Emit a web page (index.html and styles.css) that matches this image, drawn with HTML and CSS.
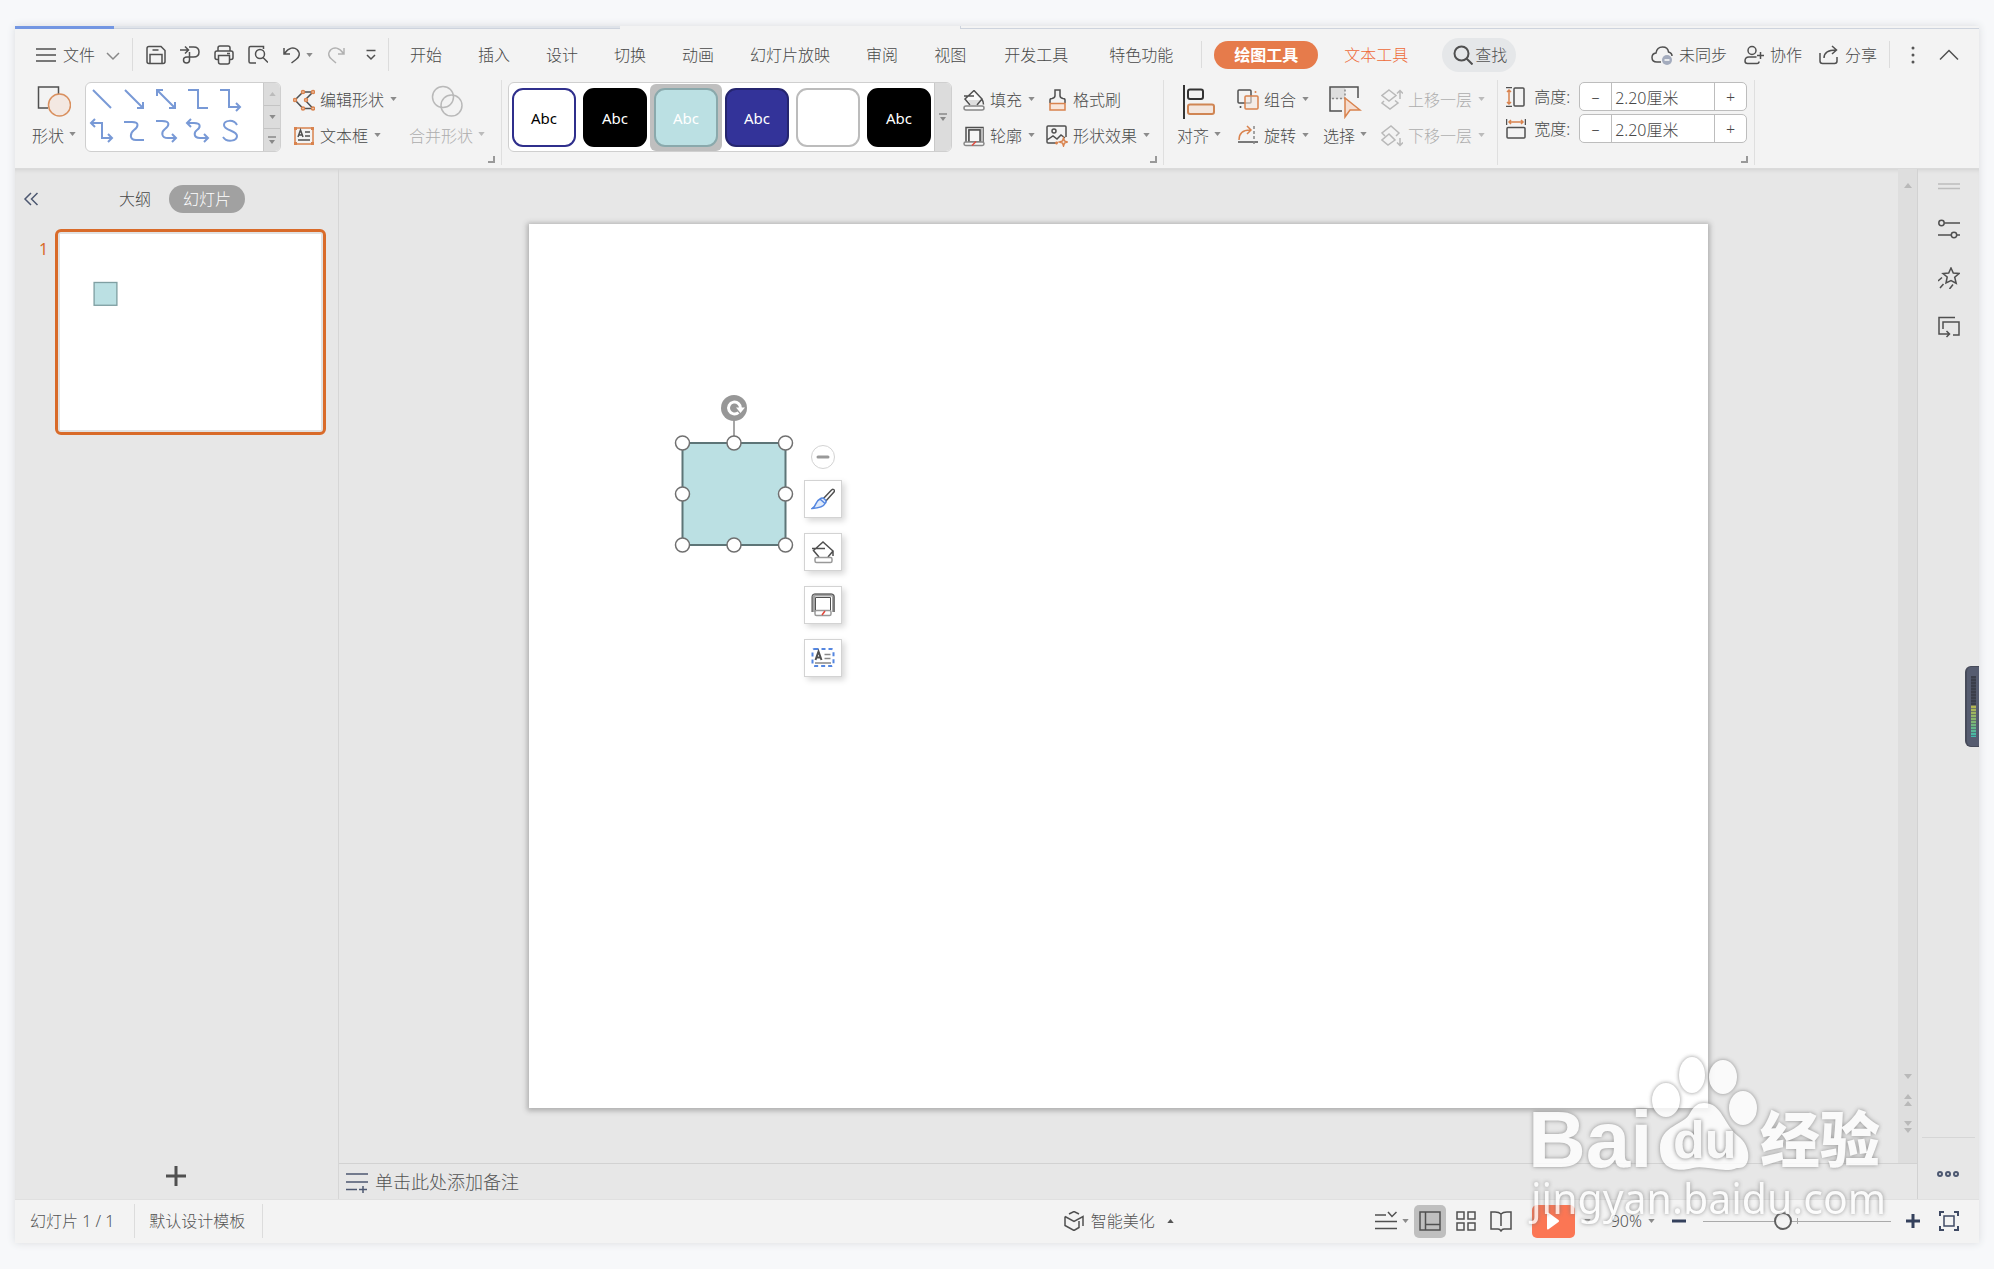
FILE: index.html
```html
<!DOCTYPE html>
<html lang="zh-CN">
<head>
<meta charset="utf-8">
<meta name="viewport" content="width=device-width, initial-scale=1">
<title>WPS 演示</title>
<link rel="stylesheet" href="styles.css">
</head>
<body>
<svg class="sprite" aria-hidden="true">
  <symbol id="caret" viewBox="0 0 8 5"><path d="M0 0h8L4 5z" fill="currentColor"/></symbol>
  <symbol id="bucket" viewBox="0 0 22 22"><path d="M11 2l8 8-5 6H7l-5-6z" fill="#fafafa" stroke="none"/><path d="M5 11h13l-4 5H8z" fill="#dedede" stroke="none"/><path d="M11 1.500l8 8.500-5 6M7 16l-5-6 9-8.500M1 7h10M19 10.500q1.500 2 1.500 5"/><rect x="1" y="17" width="20" height="4" rx="2" fill="#f7f7f7" stroke="#888"/></symbol>
  <symbol id="outline" viewBox="0 0 22 22"><path d="M3 17V2.500h17V17M6 17V5h11v12" fill="none"/><path d="M17.500 3H20v14h-2.500z" fill="#bbb" stroke="none"/><path d="M6 5h11v12H6z" fill="#f7f7f7"/><rect x="1" y="17" width="20" height="3.500" rx="1.700" fill="#f7f7f7" stroke="#888"/><path d="M9 20.500l4-4" stroke="#e2483d"/></symbol>
</svg>

<div class="app">
  <div class="doc-tabs"><span class="doc-tab doc-tab-home"></span><span class="doc-tab doc-tab-other"></span><span class="doc-tab doc-tab-current"></span><span class="doc-tab doc-tab-rest"></span></div>

  <header class="menu">
    <button class="file-menu">
      <svg class="i20" viewBox="0 0 20 20"><path d="M0 4h20M0 10h20M0 16h20"/></svg>
      <span>文件</span>
      <svg class="chev" viewBox="0 0 14 14"><path d="M1 5l6 6 6-6" stroke="#888"/></svg>
    </button>
    <span class="rule"></span>
    <div class="quick">
      <button aria-label="保存"><svg class="i20" viewBox="0 0 20 20"><path d="M3 1.500h12l4 4v11q0 2-2 2H3q-2 0-2-2v-13q0-2 2-2zM4 18.500v-9h12v9M6.500 5h6"/></svg></button>
      <button aria-label="输出"><svg class="i20" viewBox="0 0 20 20"><path d="M0 5h8M5 1.500L8.500 5 5 8.500M9 2h4.500q5.500 0 5.500 5t-5.500 5H7q-3.500 0-3.500 3t3 3T9.500 15V7"/></svg></button>
      <button aria-label="打印"><svg class="i20" viewBox="0 0 20 20"><path d="M4 6V3q0-2 2-2h8q2 0 2 2v3M4 14.500H3q-2 0-2-2V8q0-2 2-2h14q2 0 2 2v4.500q0 2-2 2h-1M4.500 10.500h11V17q0 2-2 2h-7q-2 0-2-2zM13 8.500h3"/></svg></button>
      <button aria-label="打印预览"><svg class="i20" viewBox="0 0 20 20"><path d="M8 18H2.500Q1 18 1 16.500V3q0-1.500 1.500-1.500h13V4M15 12.500l5 5"/><circle cx="12" cy="9" r="4.500"/></svg></button>
      <button class="undo" aria-label="撤销"><svg class="i20" viewBox="0 0 20 20"><path d="M2 3v6h6M2.500 8.500C7 2 12 2 15 4.500c4 4 2 8-1 10L9.500 18"/></svg><svg class="caret"><use href="#caret"/></svg></button>
      <button class="redo" aria-label="恢复"><svg class="i20" viewBox="0 0 20 20"><path d="M17 3v6h-6M16.500 8.500C12 2 7 2 4 4.500c-4 4-2 8 1 10L9 18"/></svg></button>
      <button aria-label="自定义"><svg class="i20" viewBox="0 0 20 20"><path d="M5.500 5.500h9M6 10l4 4 4-4"/></svg></button>
    </div>
    <span class="rule"></span>
    <nav class="tabs">
      <a href="#start">开始</a><a href="#insert">插入</a><a href="#design">设计</a><a href="#switch">切换</a><a href="#anim">动画</a><a href="#show">幻灯片放映</a><a href="#review">审阅</a><a href="#view">视图</a><a class="wide" href="#dev">开发工具</a><a class="wide" href="#special">特色功能</a>
    </nav>
    <span class="rule short"></span>
    <a class="draw-tab" href="#draw">绘图工具</a>
    <a class="text-tab" href="#text">文本工具</a>
    <label class="search"><svg class="i20" viewBox="0 0 20 20"><circle cx="8.500" cy="8.500" r="7" stroke-width="2"/><path d="M13.500 13.500l6 6" stroke-width="2"/></svg><input type="text" placeholder="查找" aria-label="查找"></label>
    <div class="account">
      <button><svg class="i22" viewBox="0 0 22 22"><path d="M10 18H6q-5 0-5-4.500Q1 9.500 5 9q1-6 6.500-6Q17 3 17.500 8q3.500 1 3.500 4"/><circle cx="16" cy="16" r="5" fill="#a3abbd" stroke="none"/><path d="M13.500 16h5" stroke="#fff"/></svg>未同步</button>
      <button><svg class="i20" viewBox="0 0 20 20"><circle cx="8" cy="5.500" r="4"/><path d="M12.500 12H5q-4 0-4 4 0 2.500 2.500 2.500H13q2 0 2-2M16.500 7v7M13 10.500h7"/></svg>协作</button>
      <button><svg class="i20" viewBox="0 0 20 20"><path d="M1 8v8q0 2.500 2.500 2.500h12q2.500 0 2.500-2.500v-4M5 13q0-8 12-8M13 1l4.500 4-4.500 4"/></svg>分享</button>
    </div>
    <span class="rule short"></span>
    <button class="more" aria-label="更多"><svg class="i20" viewBox="0 0 20 20"><g fill="#555" stroke="none"><circle cx="10" cy="3" r="1.500"/><circle cx="10" cy="10" r="1.500"/><circle cx="10" cy="17" r="1.500"/></g></svg></button>
    <button class="collapse" aria-label="收起功能区"><svg class="i20" viewBox="0 0 20 20"><path d="M1 14.500l9-9 9 9"/></svg></button>
  </header>

  <section class="ribbon">
    <div class="group g-shape">
      <button class="big"><svg class="i34" viewBox="0 0 34 34"><path d="M11 23H1.500V2h20v7"/><circle cx="22.500" cy="20" r="11" fill="#f3e8e2" stroke="#d9905f"/></svg><span>形状<svg class="caret"><use href="#caret"/></svg></span></button>
      <div class="line-gallery">
        <div class="line-grid">
          <svg viewBox="0 0 33 32"><path d="M7 7l18 18"/></svg>
          <svg viewBox="0 0 33 32"><path d="M7 7l18 18M25 19v6h-6"/></svg>
          <svg viewBox="0 0 33 32"><path d="M7 7l18 18M25 19v6h-6M7 13V7h6"/></svg>
          <svg viewBox="0 0 33 32"><path d="M6 7h10v18h10"/></svg>
          <svg viewBox="0 0 33 32"><path d="M6 7h9v17h10M22 20l4 4-4 4"/></svg>
          <svg viewBox="0 0 33 32"><path d="M6 8h10v15h9M9 4L5 8l4 4M22 19l4 4-4 4"/></svg>
          <svg viewBox="0 0 33 32"><path d="M6 7h8c8 0 6 5 2 8s-5 10 2 10h8"/></svg>
          <svg viewBox="0 0 33 32"><path d="M6 6h6c9 0 7 5 3 8s-4 9 3 9h7M22 19l4 4-4 4"/></svg>
          <svg viewBox="0 0 33 32"><path d="M6 8h6c8 0 6 5 3 7s-4 8 3 8h7M9 4L5 8l4 4M22 19l4 4-4 4"/></svg>
          <svg viewBox="0 0 33 32"><path d="M23 10c-3-6-13-5-13 0 0 6 13 5 13 11 0 5-10 7-14 1"/></svg>
        </div>
        <div class="stepper">
          <button class="off" aria-label="上一行"><svg class="caret flip"><use href="#caret"/></svg></button>
          <button aria-label="下一行"><svg class="caret"><use href="#caret"/></svg></button>
          <button aria-label="全部形状"><svg class="drop" viewBox="0 0 8 9"><path d="M0 1h8" stroke="#888"/><path d="M1 4h6L4 8z" fill="#888" stroke="none"/></svg></button>
        </div>
      </div>
      <div class="stack">
        <button><svg class="i22" viewBox="0 0 22 22"><path d="M10 3L2 11l8 8.500h10L12 11l8-8z"/><g fill="#f7ddce" stroke="#d9834e"><circle cx="10" cy="3" r="1.500"/><circle cx="20" cy="3" r="1.500"/><circle cx="2" cy="11" r="1.500"/><circle cx="13" cy="11" r="1.500"/><circle cx="10" cy="19.500" r="1.500"/><circle cx="20" cy="19.500" r="1.500"/></g></svg>编辑形状<svg class="caret"><use href="#caret"/></svg></button>
        <button><svg class="i22" viewBox="0 0 22 22"><rect x="2" y="3" width="18" height="16" stroke="#d9834e"/><path d="M5 12l2.500-7L10 12M6 10h3M12 7h5M12 11h5M5 15h12"/><g fill="#d9834e" stroke="none"><path d="M1 2h3v3H1zM18 2h3v3h-3zM1 17h3v3H1zM18 17h3v3h-3z"/></g></svg>文本框<svg class="caret"><use href="#caret"/></svg></button>
      </div>
      <button class="big off" disabled><svg class="i34" viewBox="0 0 34 34"><circle cx="13" cy="12" r="10.500"/><circle cx="21.500" cy="20.500" r="10.500"/></svg><span>合并形状<svg class="caret"><use href="#caret"/></svg></span></button>
      <i class="corner"></i>
    </div>

    <div class="group g-style">
      <div class="styles">
        <div class="swatches">
          <button class="sw sw-line">Abc</button><button class="sw sw-black">Abc</button><button class="picked"><span class="sw sw-teal">Abc</span></button><button class="sw sw-indigo">Abc</button><button class="sw sw-none" aria-label="无文字样式"></button><button class="sw sw-black">Abc</button>
        </div>
        <div class="stepper"><button aria-label="更多样式"><svg class="drop" viewBox="0 0 8 9"><path d="M0 1h8" stroke="#888"/><path d="M1 4h6L4 8z" fill="#888" stroke="none"/></svg></button></div>
      </div>
      <div class="stack">
        <button><svg class="i22"><use href="#bucket"/></svg>填充<svg class="caret"><use href="#caret"/></svg></button>
        <button><svg class="i22"><use href="#outline"/></svg>轮廓<svg class="caret"><use href="#caret"/></svg></button>
      </div>
      <div class="stack">
        <button><svg class="i22" viewBox="0 0 22 22"><path d="M4 14V11q0-1.500 2-1.500 3-.5 3-3V1h5v5.500q0 2.500 3 3 2 0 2 1.500v3"/><path d="M4 14.500h15V21H4z" fill="#f9e6da" stroke="#d9834e"/></svg>格式刷</button>
        <button><svg class="i22" viewBox="0 0 22 22"><path d="M10 18H2q-1 0-1-1V2q0-1 1-1h17q1 0 1 1v10M1 15l6-4 4 3 4-4 4 3"/><circle cx="8" cy="6" r="2"/><path d="M17.500 13l1 3 3 1-3 1-1 3-1-3-3-1 3-1zM10.500 16.500v3M9 18h3" stroke="#d9834e"/></svg>形状效果<svg class="caret"><use href="#caret"/></svg></button>
      </div>
      <i class="corner"></i>
    </div>

    <div class="group g-arrange">
      <button class="big"><svg class="i34" viewBox="0 0 34 34"><path d="M2 0v34" stroke-width="2" stroke="#333"/><rect x="6" y="4.500" width="15" height="9.500" rx="2" stroke-width="2" stroke="#333"/><rect x="6" y="19.500" width="26" height="9.500" rx="2" fill="#f3e6de" stroke="#d08553" stroke-width="2"/></svg><span>对齐<svg class="caret"><use href="#caret"/></svg></span></button>
      <div class="stack arrange-a">
        <button><svg class="i22" viewBox="0 0 22 22"><rect x="1" y="1" width="13" height="13" rx="1"/><rect x="8" y="7" width="13" height="13" rx="1" fill="#f3e6de" fill-opacity=".6" stroke="#d9834e"/><circle cx="18.500" cy="3" r="1" fill="#d9834e" stroke="none"/><circle cx="3.500" cy="18" r="1" fill="#444" stroke="none"/></svg>组合<svg class="caret"><use href="#caret"/></svg></button>
        <button><svg class="i22" viewBox="0 0 22 22"><path d="M1 17h20"/><path d="M17 1v20" stroke-dasharray="3 2" stroke="#888"/><path d="M2 15Q2 5 13 5M10 1l4 4-4 4" stroke="#d9834e"/></svg>旋转<svg class="caret"><use href="#caret"/></svg></button>
      </div>
      <button class="big"><svg class="i34" viewBox="0 0 34 34"><path d="M2 3h15v11H2z" fill="#dedede" stroke="none"/><path d="M14 26H2V2h28v11"/><path d="M4 13.500h13V4" stroke-dasharray="2 2" stroke="#888"/><path d="M17 13v19l5-7h10z" fill="#f5ddd0" stroke="#d9834e"/></svg><span>选择<svg class="caret"><use href="#caret"/></svg></span></button>
      <div class="stack off arrange-b">
        <button disabled><svg class="i22" viewBox="0 0 22 22"><path d="M8 1l7 5.500L8 12 1 6.500zM3 12l-2 2 8 6 8-6-3-2.500M19 10V2M16 4.500L19 1.500l3 3"/></svg>上移一层<svg class="caret"><use href="#caret"/></svg></button>
        <button disabled><svg class="i22" viewBox="0 0 22 22"><path d="M4 11L1 8l9-7 8 7-3 3M8 9l-7 6 6 5 7-5zM19 13v7M16 17.500l3 3 3-3"/></svg>下移一层<svg class="caret"><use href="#caret"/></svg></button>
      </div>
    </div>

    <div class="group g-size">
      <div class="size-row">
        <svg class="i20" viewBox="0 0 20 20"><rect x="8" y="1" width="10" height="18" rx="1"/><path d="M0 .5h6M0 19.500h6"/><path d="M3 3v14M1 5l2-2 2 2M1 15l2 2 2-2" stroke="#d9834e"/></svg>
        <label for="h">高度:</label>
        <div class="spin"><button aria-label="减小高度">–</button><input id="h" type="text" value="2.20厘米"><button aria-label="增大高度">+</button></div>
      </div>
      <div class="size-row">
        <svg class="i20" viewBox="0 0 20 20"><rect x="1" y="8.500" width="18" height="10.500" rx="1"/><path d="M.5 0v6M19.500 0v6"/><path d="M3 3h14M5 1L3 3l2 2M15 1l2 2-2 2" stroke="#d9834e"/></svg>
        <label for="w">宽度:</label>
        <div class="spin"><button aria-label="减小宽度">–</button><input id="w" type="text" value="2.20厘米"><button aria-label="增大宽度">+</button></div>
      </div>
      <i class="corner"></i>
    </div>
  </section>

  <main class="work">
    <aside class="outline">
      <div class="outline-head">
        <button class="fold" aria-label="收起"><svg class="i16" viewBox="0 0 16 16"><path d="M8 2L2 8l6 6M14.500 2l-6 6 6 6" stroke="#4d5871"/></svg></button>
        <button class="outline-tab">大纲</button>
        <button class="outline-tab current">幻灯片</button>
      </div>
      <div class="slide-row"><span class="slide-no">1</span><button class="thumb" aria-label="幻灯片 1"><svg viewBox="0 0 1179 884"><rect x="154" y="219" width="103" height="103" fill="#bbe0e3" stroke="#7f9fa2" stroke-width="6"/></svg></button></div>
      <button class="add" aria-label="新建幻灯片"><svg class="i22" viewBox="0 0 22 22"><path d="M11 1v20M1 11h20" stroke-width="3"/></svg></button>
    </aside>

    <div class="center">
      <div class="stage">
        <div class="canvas">
          <div class="slide">
            <svg class="shape" viewBox="0 0 120 158">
              <path d="M60 24v18" stroke="#888"/>
              <rect x="8.500" y="48" width="103" height="102" fill="#bbe0e3" stroke="#5d7577" stroke-width="2"/>
              <circle cx="60" cy="13" r="13" fill="#979797" stroke="none"/>
              <path d="M64.500 17.500a6 6 0 1 1 2-4" stroke="#fff" stroke-width="3"/><path d="M62 12.500h9L66.500 18z" fill="#fff" stroke="none"/>
              <g fill="#fff" stroke="#707070"><circle cx="8.500" cy="48" r="7"/><circle cx="60" cy="48" r="7"/><circle cx="111.500" cy="48" r="7"/><circle cx="8.500" cy="99" r="7"/><circle cx="111.500" cy="99" r="7"/><circle cx="8.500" cy="150" r="7"/><circle cx="60" cy="150" r="7"/><circle cx="111.500" cy="150" r="7"/></g>
            </svg>
            <div class="floatbar">
              <button class="minus" aria-label="收起工具"><svg class="i22" viewBox="0 0 22 22"><path d="M6 11h10" stroke-width="3" stroke="#999" stroke-linecap="round"/></svg></button>
              <button aria-label="样式"><svg class="i24" viewBox="0 0 24 24"><path d="M12 12l8.500-9q2-1.500 3 .5 0 1-1 2L14 15"/><path d="M9 12q2-2 4.500 0 2.500 2 1 4-2.500 5-13.500 5.500 3-2 4-5 1-3 4-4.500zM9.500 12.500l4.500 4" fill="#dfeafb" stroke="#5486e0"/></svg></button>
              <button aria-label="填充"><svg class="i24" viewBox="0 0 24 24"><path d="M8 17L2.500 10.500 12 2l10 9-5 6M1 8.500h13M22 11v5"/><rect x="4" y="17.500" width="17" height="5" rx="1.500" stroke="#999"/></svg></button>
              <button aria-label="轮廓"><svg class="i24" viewBox="0 0 24 24"><path d="M2.500 19V4q0-2 2-2h16q2 0 2 2v15" stroke="#a5a5a5" stroke-width="3"/><path d="M1 19V3.500Q1 1 3.500 1h17Q23 1 23 3.500V19M4.500 18V4.500h15V18" stroke-width="1"/><rect x="4" y="17.500" width="16" height="5" rx="1.500" fill="#fff" stroke="#999"/><path d="M11 22l3-4" stroke="#e2483d"/></svg></button>
              <button aria-label="文本框"><svg class="i24" viewBox="0 0 24 24"><rect x="1.500" y="3" width="21" height="17" rx="2" stroke="#5486e0" stroke-dasharray="4 3" stroke-width="2"/><path d="M4.500 14l3-8.500 3 8.500M5.500 11.500h4" stroke-width="2"/><path d="M13.500 8.500h6M13.500 12.500h6M4 17h16" stroke="#888"/></svg></button>
            </div>
          </div>
        </div>
        <div class="vscroll">
          <svg class="caret flip"><use href="#caret"/></svg>
          <svg class="caret last"><use href="#caret"/></svg>
          <svg class="pair" viewBox="0 0 8 12"><path d="M0 5h8L4 0zM0 12h8L4 7z"/></svg>
          <svg class="pair" viewBox="0 0 8 12"><path d="M0 0h8L4 5zM0 7h8l-4 5z"/></svg>
        </div>
      </div>
      <label class="notes"><svg class="i22" viewBox="0 0 22 22"><path d="M0 3h22M0 11h22M0 18.500h11M13 18.500h8M17 15v7" stroke="#4d5871"/></svg><input type="text" placeholder="单击此处添加备注" aria-label="备注"></label>
    </div>

    <aside class="side">
      <svg class="grip" viewBox="0 0 22 7"><path d="M0 1h22M0 5.500h22"/></svg>
      <button aria-label="属性"><svg class="i22" viewBox="0 0 22 22"><circle cx="3.500" cy="5" r="2.700"/><path d="M6.500 5H22M0 17h13M19 17h3"/><circle cx="16" cy="17" r="2.700"/></svg></button>
      <button aria-label="动画"><svg class="i22" viewBox="0 0 22 22"><path d="M13 1l2.300 5 5.700.5-4.300 3.700 1.500 6L13 13.500 8 16l1.200-6L5 6.500l5.700-.5zM4 10.500L0 14M5.500 17L2 21M15 17.500L11.500 22"/></svg></button>
      <button aria-label="切换"><svg class="i22" viewBox="0 0 22 22"><path d="M17 1.500H1V18h10M8.500 15l3 3-3 3M5 13V6h16v13h-6"/></svg></button>
      <button class="dots" aria-label="更多"><svg class="i22" viewBox="0 0 22 22"><g stroke="#4d5871" stroke-width="2"><circle cx="3" cy="11" r="2"/><circle cx="11" cy="11" r="2"/><circle cx="19" cy="11" r="2"/></g></svg></button>
      <div class="meter"><span></span></div>
    </aside>
  </main>

  <footer class="status">
    <span class="page-no">幻灯片 1 / 1</span><span class="template">默认设计模板</span>
    <button class="beautify"><svg class="i20" viewBox="0 0 20 20"><path d="M5 3l5-2.500L15 3M1 5.500v9l9 5 5-3V10M1 5.500l9 5 9-5V15"/></svg>智能美化<svg class="caret flip"><use href="#caret"/></svg></button>
    <div class="views">
      <button class="remark" aria-label="备注"><svg class="i22" viewBox="0 0 22 22"><path d="M0 5h11M0 11.500h22M0 18.500h22M13 2l4 4.500L21.500 2"/></svg><svg class="caret"><use href="#caret"/></svg></button>
      <button class="view current" aria-label="普通视图"><svg class="i22" viewBox="0 0 22 22"><rect x="1" y="2" width="20" height="18"/><path d="M6.500 2v18M6.500 14.500H21"/></svg></button>
      <button class="view" aria-label="浏览视图"><svg class="i22" viewBox="0 0 22 22"><path d="M2 2h7v7H2zM13 2h7v7h-7zM2 13h7v7H2zM13 13h7v7h-7z"/></svg></button>
      <button class="view" aria-label="阅读视图"><svg class="i22" viewBox="0 0 22 22"><path d="M11 4v12M11 4Q9 2 5 2H1v17h7q2 0 3 2 1-2 3-2h7V2h-4q-4 0-6 2z"/></svg></button>
      <button class="play" aria-label="放映"><svg viewBox="0 0 12 18"><path d="M0 1.500Q0 0 1.500.8L11.500 8q1 1 0 2L1.500 17.200Q0 18 0 16.500z" fill="#fff" stroke="none"/></svg></button>
      <svg class="caret play-caret"><use href="#caret"/></svg>
      <button class="zoom">90%<svg class="caret"><use href="#caret"/></svg></button>
      <button class="step" aria-label="缩小"><svg class="i14" viewBox="0 0 14 14"><path d="M0 7h14" stroke="#34405c" stroke-width="3"/></svg></button>
      <input class="slider" type="range" min="0" max="100" value="42" aria-label="显示比例">
      <button class="step" aria-label="放大"><svg class="i14" viewBox="0 0 14 14"><path d="M0 7h14M7 0v14" stroke="#34405c" stroke-width="3"/></svg></button>
      <button class="fit" aria-label="适合窗口"><svg class="i20" viewBox="0 0 20 20"><g stroke="#3f4a64"><path d="M1 5V1h4M15 1h4v4M1 15v4h4M19 15v4h-4" stroke-width="2"/><rect x="5" y="5" width="10" height="10"/></g></svg></button>
    </div>
  </footer>
</div>

<svg class="watermark" viewBox="0 0 380 190" role="img" aria-label="Baidu 经验">
  <g class="mark">
    <ellipse cx="145" cy="60" rx="14" ry="17"/><ellipse cx="171" cy="35" rx="13" ry="18"/><ellipse cx="202" cy="37" rx="14" ry="17"/><ellipse cx="222" cy="68" rx="14" ry="17"/>
    <path d="M183 63c18 0 20 22 34 33 14 10 14 34-1 32-14 6-30-3-44 0-14 4-33 3-33-20 0-23 25-23 30-35 4-7 8-10 14-10z"/>
    <text class="bai" x="7" y="127">Bai</text>
    <text class="yan" x="239" y="122">经验</text>
    <text class="url" x="10" y="174">jingyan.baidu.com</text>
  </g>
  <text class="du" x="152" y="118">du</text>
</svg>
</body>
</html>
```

FILE: styles.css
```css
* { box-sizing: border-box; }
body {
  margin: 0;
  min-height: 100vh;
  padding: 26px 15px;
  display: flex;
  position: relative;
  overflow-x: hidden;
  background: #f7f8fa;
  color: #484848;
  font: 300 16px/24px "Noto Sans", "Noto Sans CJK SC", sans-serif;
}
button, input { font: inherit; color: inherit; }
button { border: 0; padding: 0; background: none; white-space: nowrap; }
a { color: inherit; text-decoration: none; white-space: nowrap; }
svg { display: block; flex: none; fill: none; stroke: #505050; stroke-width: 1.5; }
.sprite { position: absolute; width: 0; height: 0; }
.i14 { width: 14px; height: 14px; }
.i16 { width: 16px; height: 16px; }
.i20 { width: 20px; height: 20px; }
.i22 { width: 22px; height: 22px; }
.i24 { width: 24px; height: 24px; }
.i34 { width: 34px; height: 34px; }
.caret { width: 7px; height: 4px; color: #8b8b8b; stroke: none; }
.flip { transform: rotate(180deg); }

.app {
  flex: 1;
  min-width: 0;
  display: flex;
  flex-direction: column;
  background: #f3f3f3;
  box-shadow: 0 0 8px #d9dcdf;
}

.doc-tabs { display: flex; height: 3px; flex: none; }
.doc-tab-home { width: 99px; background: #7396e2; }
.doc-tab-other { width: 506px; background: #dfe3e9; border-bottom: 1px solid #cdd3dd; }
.doc-tab-current { width: 340px; }
.doc-tab-rest { flex: 1; border-bottom: 1px solid #cdd3dd; border-left: 1px solid #cdd3dd; }

/* menu */
.menu { display: flex; align-items: center; flex: none; height: 51px; padding: 0 20px 0 21px; }
.menu button { display: flex; align-items: center; }
.rule { width: 1px; height: 33px; background: #dcdcdc; flex: none; }
.rule.short { height: 27px; }
.file-menu { gap: 7px; margin-right: 12px; }
.chev { width: 14px; height: 14px; margin-left: 4px; }
.quick { display: flex; align-items: center; gap: 14px; padding: 0 7px 0 13px; }
.undo { gap: 4px; }
.redo { opacity: .4; }
.tabs { display: flex; gap: 36px; padding: 0 28px 0 21px; }
.tabs .wide { margin-left: 2px; }
.tabs .wide + .wide { margin-left: 5px; }
.draw-tab {
  margin-left: 12px;
  padding: 2px 20px;
  border-radius: 14px;
  background: #e67b4b;
  color: #fff;
  font-weight: 700;
}
.text-tab { margin: 0 34px 0 26px; color: #ee6a38; }
.search {
  display: flex;
  align-items: center;
  width: 74px;
  height: 34px;
  padding-left: 11px;
  border-radius: 17px;
  background: #e5e7e9;
  flex: none;
}
.search input { width: 40px; padding: 0 0 0 2px; border: 0; background: none; outline: 0; }
.search input::placeholder, .notes input::placeholder { color: #545454; opacity: 1; }
.account { display: flex; gap: 17px; margin: 0 12px 0 auto; }
.account button { gap: 6px; }
.more { margin: 0 16px 0 13px; }

/* ribbon */
.ribbon { display: flex; flex: none; height: 89px; padding-bottom: 3px; border-bottom: 1px solid #dadada; }
.group { position: relative; display: flex; align-items: flex-start; padding-top: 2px; border-right: 1px solid #dfdfdf; }
.g-shape { padding-left: 17px; padding-right: 16px; }
.g-style { padding-left: 6px; padding-right: 13px; }
.g-arrange { padding-left: 13px; padding-right: 12px; }
.g-size { padding-left: 8px; padding-right: 7px; flex-direction: column; gap: 3px; }
.corner { position: absolute; right: 6px; bottom: 2px; width: 7px; height: 7px; border: solid #999; border-width: 0 2px 2px 0; }
.big { display: flex; flex-direction: column; align-items: center; }
.big > svg { margin: 3px 0; }
.big span { display: flex; align-items: center; gap: 5px; height: 28px; }
.big span .caret { margin-top: -4px; }
.off { color: #adadad; }
.off svg { stroke: #b9b9b9; }
.off .caret { color: #bbb; stroke: none; }
.stack { display: flex; flex-direction: column; }
.stack button { display: flex; align-items: center; gap: 5px; height: 36px; }
.stack .caret { margin-top: -3px; margin-left: 1px; }

.line-gallery, .styles {
  display: flex;
  height: 70px;
  overflow: hidden;
  border: 1px solid #cfcfcf;
  border-radius: 6px;
  background: #fff;
}
.line-gallery { margin: 0 12px 0 9px; }
.g-shape .stack { width: 104px; margin-right: 12px; }
.line-grid { display: grid; grid-template-columns: repeat(5, 32px); grid-auto-rows: 32px; padding: 0 17px 0 0; }
.line-grid svg { stroke: #7899d6; stroke-width: 2; width: 33px; height: 32px; }
.stepper { display: flex; flex-direction: column; width: 17px; background: #dcdcdc; border-left: 1px solid #c9c9c9; }
.stepper button { flex: 1; display: flex; align-items: center; justify-content: center; }
.stepper button + button { border-top: 1px solid #c4c4c4; }
.drop { width: 8px; height: 9px; }

.swatches { display: flex; gap: 7px; padding: 5px 3px 0; }
.sw { display: flex; align-items: center; justify-content: center; width: 64px; height: 59px; border: 2px solid #000; border-radius: 11px; font-size: 15px; font-weight: 400; color: #fff; }
.sw-line { border-color: #2f2f8c; color: #000; }
.sw-black { background: #000; }
.picked { height: 67px; margin: -4px; padding: 4px; border-radius: 6px; background: #bfbfbf; }
.sw-teal { background: #bbe0e3; border-color: #8aa9ac; }
.sw-indigo { background: #333399; border-color: #25256f; }
.sw-none { border-color: #bcbcbc; }
.g-style .stack { margin-left: 11px; }
.g-arrange .arrange-a { margin: 0 14px 0 16px; }
.g-arrange .arrange-b { margin-left: 14px; }

.size-row { display: flex; align-items: center; height: 29px; gap: 8px; }
.size-row label { width: 37px; white-space: nowrap; }
.spin { display: flex; width: 168px; height: 29px; border: 1px solid #bdbdbd; border-radius: 5px; background: #fff; }
.spin button { width: 31px; line-height: 24px; }
.spin input { flex: 1; min-width: 0; height: 27px; padding: 0 3px; border: solid #bdbdbd; border-width: 0 1px; background: none; outline: 0; }

/* work area */
.work { flex: 1; display: flex; min-height: 0; background: #e7e7e7; box-shadow: inset 0 4px 4px -3px #d0d0d0; }
.outline { width: 324px; flex: none; display: flex; flex-direction: column; border-right: 1px solid #d6d6d6; }
.outline-head { display: flex; align-items: center; height: 28px; margin: 16px 0 16px; padding-left: 8px; }
.fold { margin-right: 80px; }
.outline-tab { height: 28px; }
.outline-tab.current { margin-left: 18px; padding: 0 14px; border-radius: 14px; background: #a1a1a1; color: #fff; }
.slide-row { display: flex; padding: 0 12px 0 24px; }
.slide-no { width: 16px; padding-top: 8px; color: #d96b2a; font-weight: 400; }
.thumb { flex: 1; padding: 2px; border: 3px solid #d96b2a; border-radius: 6px; background: #e2e2e2; }
.thumb svg { width: 100%; background: #fff; }
.add { margin: auto auto 12px 150px; }

.center { flex: 1; min-width: 0; display: flex; flex-direction: column; }
.stage { flex: 1; min-height: 0; display: flex; }
.canvas { flex: 1; min-width: 0; display: flex; justify-content: center; padding: 55px 0; overflow: hidden; }
.slide { position: relative; flex: none; height: 100%; aspect-ratio: 4 / 3; background: #fff; box-shadow: 0 1px 5px 2px #b0b0b0; }
.shape { position: absolute; left: 145px; top: 171px; width: 120px; height: 158px; }
.floatbar { position: absolute; left: 275px; top: 221px; display: flex; flex-direction: column; align-items: center; gap: 15px; }
.floatbar button { display: flex; align-items: center; justify-content: center; width: 38px; height: 38px; border: 1px solid #d3d3d3; background: #fff; box-shadow: 3px 3px 6px #d8d8d8; }
.floatbar .minus { width: 24px; height: 24px; margin-bottom: -4px; border-radius: 50%; box-shadow: none; }
.vscroll { width: 20px; flex: none; display: flex; flex-direction: column; align-items: center; gap: 15px; padding: 14px 0 30px; background: #dedede; border-right: 1px solid #d2d2d2; }
.vscroll .caret { width: 8px; height: 5px; color: #b9b9b9; }
.vscroll .last { margin-top: auto; }
.pair { width: 8px; height: 12px; fill: #b9b9b9; stroke: none; }
.notes { display: flex; align-items: center; gap: 7px; flex: none; height: 36px; padding-left: 7px; border: solid #d2d2d2; border-width: 1px 1px 0 0; font-size: 18px; }
.notes input { flex: 1; border: 0; padding: 0; background: none; outline: 0; }

.side { position: relative; width: 61px; flex: none; display: flex; flex-direction: column; align-items: center; gap: 27px; padding-top: 14px; }
.grip { width: 22px; height: 7px; margin-bottom: 1px; stroke: #bdbdbd; }
.side button { height: 22px; }
.side .dots { width: 53px; height: 62px; margin-top: auto; padding: 25px 0 15px 15px; border-top: 1px solid #d6d6d6; }
.meter { position: absolute; right: 0; top: 497px; width: 14px; height: 81px; padding: 9px 3px 9px 4px; border: solid #474b5a; border-width: 1px 0 1px 2px; border-radius: 6px 0 0 6px; background: #565c70; }
.meter span { display: block; height: 100%; background: repeating-linear-gradient(transparent 0 2px, #4b516399 2px 3px), linear-gradient(#3b3e4a 0 48%, #b9b650 48%, #7fb573 75%, #3fb9ae); }

/* status bar */
.status { display: flex; align-items: center; flex: none; height: 44px; padding: 0 20px 1px 15px; border-top: 1px solid #e0e0e0; color: #545454; }
.page-no, .template { height: 34px; line-height: 34px; border-right: 1px solid #dcdcdc; white-space: nowrap; }
.page-no { padding-right: 20px; }
.template { padding: 0 17px 0 14px; }
.beautify { display: flex; align-items: center; gap: 7px; margin: 0 201px 0 auto; }
.beautify .caret { color: #555; margin-left: 5px; }
.views { display: flex; align-items: center; }
.remark { display: flex; align-items: center; gap: 5px; margin-right: 5px; }
.view { width: 32px; height: 33px; margin-right: 3px; padding: 0 5px; border-radius: 5px; }
.view.current { background: #bfbfbf; margin-right: 4px; }
.play { display: flex; align-items: center; justify-content: center; width: 43px; height: 33px; margin: 0 9px 0 12px; border-radius: 5px; background: #fb7654; }
.play svg { width: 12px; height: 18px; }
.zoom { display: flex; align-items: center; gap: 6px; margin: 0 17px 0 20px; }
.slider { appearance: none; width: 188px; height: 20px; margin: 0 15px 0 17px; background: linear-gradient(#aaa, #aaa) 0 50% / 100% 1px no-repeat, linear-gradient(#aaa, #aaa) 50% 50% / 1px 6px no-repeat; }
.slider::-webkit-slider-thumb { appearance: none; width: 18px; height: 18px; border: 2px solid #606060; border-radius: 50%; background: #f3f3f3; }
.fit { margin-left: 19px; }

/* watermark lies over the whole window */
.watermark { position: absolute; right: 93px; bottom: 39px; width: 380px; height: 190px; stroke: none; pointer-events: none; font-weight: 700; }
.mark { fill: #fff; opacity: .8; filter: drop-shadow(0 0 2px #777); }
.bai { font-family: "Liberation Sans", sans-serif; font-size: 80px; }
.yan { font-family: "Noto Sans CJK SC", sans-serif; font-size: 60px; font-weight: 900; }
.url { font-family: "Noto Sans", sans-serif; font-size: 41px; font-weight: 400; }
.du { font-family: "Liberation Sans", sans-serif; font-size: 52px; fill: #f8f8f8; filter: drop-shadow(0 0 2px #777); }
```
